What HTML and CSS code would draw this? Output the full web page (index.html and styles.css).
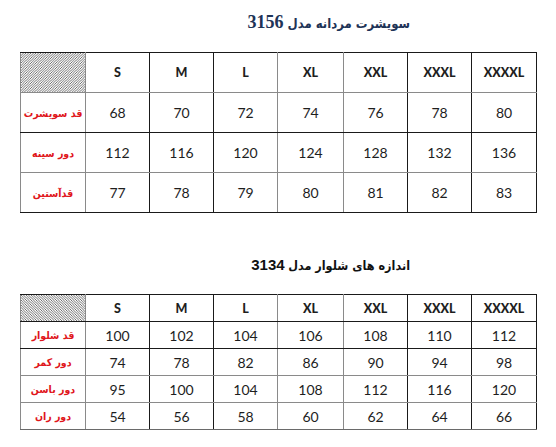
FILE: index.html
```html
<!DOCTYPE html>
<html lang="fa">
<head>
<meta charset="utf-8">
<link rel="stylesheet" href="styles.css">
</head>
<body>
<svg class="defs" width="0" height="0" aria-hidden="true">
  <defs>
    <pattern id="hatchA" patternUnits="userSpaceOnUse" width="2.5" height="2.5">
      <path d="M-1,1 L1,-1 M0,2.5 L2.5,0 M1.5,3.5 L3.5,1.5" stroke="#4a4a4a" stroke-width="0.8"></path>
    </pattern>
    <pattern id="hatchB" patternUnits="userSpaceOnUse" width="2.5" height="2.5">
      <path d="M-1,1.5 L1,3.5 M0,0 L2.5,2.5 M1.5,-1 L3.5,1" stroke="#4a4a4a" stroke-width="0.8"></path>
    </pattern>
  </defs>
</svg>
<div class="page">
  <h1 class="title title-navy" dir="rtl"><span class="ar">سویشرت مردانه مدل</span> <span class="num-serif">3156</span></h1>
  <table class="sizes tall">
    <colgroup>
      <col class="c-label"><col class="c64"><col class="c64"><col class="c64"><col class="c66"><col class="c64"><col class="c64"><col class="c65">
    </colgroup>
    <tr class="head g-bottom">
      <td class="hatch"><svg class="hatch-svg" width="64" height="39"><rect width="64" height="39" fill="url(#hatchA)"></rect></svg></td><td>S</td><td>M</td><td>L</td><td>XL</td><td>XXL</td><td>XXXL</td><td>XXXXL</td>
    </tr>
    <tr>
      <td class="label">قد سویشرت</td><td>68</td><td>70</td><td>72</td><td>74</td><td>76</td><td>78</td><td>80</td>
    </tr>
    <tr class="g-bottom">
      <td class="label">دور سینه</td><td>112</td><td>116</td><td>120</td><td>124</td><td>128</td><td>132</td><td>136</td>
    </tr>
    <tr>
      <td class="label">قدآستین</td><td>77</td><td>78</td><td>79</td><td>80</td><td>81</td><td>82</td><td>83</td>
    </tr>
  </table>

  <h2 class="title title-black" dir="rtl"><span class="ar">اندازه های شلوار مدل</span> <span class="num-sans">3134</span></h2>
  <table class="sizes short">
    <colgroup>
      <col class="c-label"><col class="c64"><col class="c64"><col class="c64"><col class="c66"><col class="c64"><col class="c64"><col class="c65">
    </colgroup>
    <tr class="head">
      <td class="hatch"><svg class="hatch-svg" width="64" height="26"><rect width="64" height="26" fill="url(#hatchB)"></rect></svg></td><td>S</td><td>M</td><td>L</td><td>XL</td><td>XXL</td><td>XXXL</td><td>XXXXL</td>
    </tr>
    <tr>
      <td class="label">قد شلوار</td><td>100</td><td>102</td><td>104</td><td>106</td><td>108</td><td>110</td><td>112</td>
    </tr>
    <tr class="g-bottom">
      <td class="label">دور کمر</td><td>74</td><td>78</td><td>82</td><td>86</td><td>90</td><td>94</td><td>98</td>
    </tr>
    <tr class="g-bottom">
      <td class="label">دور باسن</td><td>95</td><td>100</td><td>104</td><td>108</td><td>112</td><td>116</td><td>120</td>
    </tr>
    <tr class="g-last">
      <td class="label">دور ران</td><td>54</td><td>56</td><td>58</td><td>60</td><td>62</td><td>64</td><td>66</td>
    </tr>
  </table>
</div>
</body>
</html>
```

FILE: styles.css
```css
html, body {
  margin: 0;
  padding: 0;
  background: #ffffff;
}

.defs {
  position: absolute;
  width: 0;
  height: 0;
}

.page {
  width: 556px;
  height: 447px;
  padding-left: 20px;
  box-sizing: border-box;
  overflow: hidden;
}

.title {
  width: 390px;
  margin: 0;
  line-height: 24px;
  height: 24px;
  text-align: right;
  font-weight: bold;
  white-space: nowrap;
}

.title-navy {
  margin-top: 10px;
  margin-bottom: 18px;
  color: #1f3457;
  font-size: 16px;
}

.title-black {
  margin-top: 40px;
  margin-bottom: 17px;
  color: #111111;
  font-size: 14px;
}

.ar {
  font-family: "DejaVu Sans Condensed", "DejaVu Sans", sans-serif;
}

.title-navy .ar {
  font-size: 13px;
}

.title-black .ar {
  font-size: 12.5px;
}

.num-serif {
  font-family: "Liberation Serif", serif;
  font-size: 18px;
}

.num-sans {
  font-family: "Liberation Sans", sans-serif;
  font-size: 15px;
}

.sizes {
  border-collapse: collapse;
  table-layout: fixed;
  width: 516px;
  font-family: Lato, "Liberation Sans", sans-serif;
  color: #1e1e1e;
}

.c-label { width: 65px; }
.c64 { width: 64px; }
.c66 { width: 66px; }
.c65 { width: 65px; }

.sizes td {
  border: 1px solid #1a1a1a;
  padding: 0;
  text-align: center;
  vertical-align: middle;
  font-size: 14px;
  box-sizing: border-box;
}

.sizes td:nth-child(1) {
  border-left-color: #8a8a8a;
  border-right-color: #8a8a8a;
}

.sizes td:nth-child(4),
.sizes td:nth-child(5) {
  border-right-color: #8a8a8a;
}

.sizes tr.g-bottom td {
  border-bottom-color: #8a8a8a;
}

.sizes tr.g-last td {
  border-bottom-color: #6a6a6a;
}

.sizes tr.head td {
  font-weight: 900;
  font-size: 12.5px;
}

.tall tr { height: 40px; }
.tall td { height: 40px; }
.short tr { height: 27px; }
.short td { height: 27px; }

.sizes td.hatch {
  line-height: 0;
  overflow: hidden;
}

.hatch-svg {
  display: block;
}

.sizes td.label {
  direction: rtl;
  color: #e0161b;
  font-family: "DejaVu Sans Condensed", "DejaVu Sans", sans-serif;
  font-weight: bold;
  font-size: 10.5px;
  white-space: nowrap;
}
```
